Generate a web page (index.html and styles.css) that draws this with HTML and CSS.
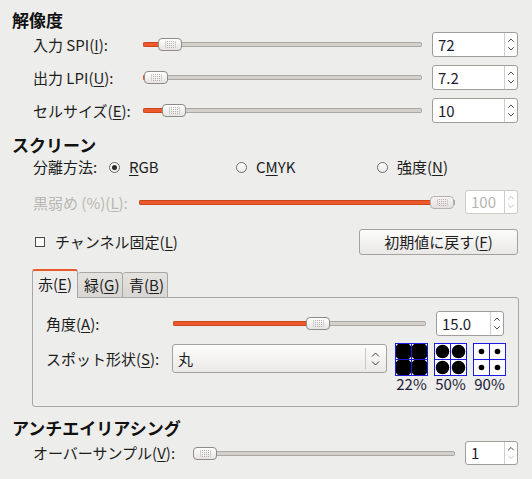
FILE: index.html
```html
<!DOCTYPE html>
<html lang="ja">
<head>
<meta charset="utf-8">
<title>Newsprint</title>
<link rel="stylesheet" href="styles.css">
</head>
<body>
<div class="page">
  <div class="heading">解像度</div>
  <div class="res-rows section">
    <div class="row res-row">
      <div class="label w110">入力 SPI(<u>I</u>):</div>
      <div class="slider"><div class="fill" style="width:15px"></div><div class="handle"></div><div class="rest"></div></div>
      <div class="spin w86"><span class="val">72</span><span class="btns"><svg width="13" height="23" viewBox="0 0 13 23"><path d="M3.5 8.5 L6.5 5.5 L9.5 8.5"/><path d="M3.5 14.5 L6.5 17.5 L9.5 14.5"/></svg></span></div>
    </div>
    <div class="row res-row">
      <div class="label w110">出力 LPI(<u>U</u>):</div>
      <div class="slider"><div class="fill thin" style="width:1px"></div><div class="handle"></div><div class="rest"></div></div>
      <div class="spin w86"><span class="val">7.2</span><span class="btns"><svg width="13" height="23" viewBox="0 0 13 23"><path d="M3.5 8.5 L6.5 5.5 L9.5 8.5"/><path d="M3.5 14.5 L6.5 17.5 L9.5 14.5"/></svg></span></div>
    </div>
    <div class="row res-row">
      <div class="label w110">セルサイズ(<u>E</u>):</div>
      <div class="slider"><div class="fill" style="width:19px"></div><div class="handle"></div><div class="rest"></div></div>
      <div class="spin w86"><span class="val">10</span><span class="btns"><svg width="13" height="23" viewBox="0 0 13 23"><path d="M3.5 8.5 L6.5 5.5 L9.5 8.5"/><path d="M3.5 14.5 L6.5 17.5 L9.5 14.5"/></svg></span></div>
    </div>
  </div>

  <div class="heading h-screen">スクリーン</div>
  <div class="section">
    <div class="radio-row">
      <div class="label">分離方法:</div>
      <div class="radio-item"><span class="radio checked"></span><u>R</u>GB</div>
      <div class="radio-item"><span class="radio"></span>C<u>M</u>YK</div>
      <div class="radio-item"><span class="radio"></span>強度(<u>N</u>)</div>
    </div>
    <div class="row black-row">
      <div class="label w106 disabled">黒弱め (%)(<u>L</u>):</div>
      <div class="slider dis"><div class="fill" style="width:291px"></div><div class="handle"></div><div class="rest"></div></div>
      <div class="spin w53 dis h24"><span class="val">100</span><span class="btns"><svg width="13" height="22" viewBox="0 0 13 22"><path d="M3.5 8 L6.5 5 L9.5 8"/><path d="M3.5 14 L6.5 17 L9.5 14"/></svg></span></div>
    </div>
    <div class="check-row">
      <span class="checkbox"></span>
      <span class="check-text">チャンネル固定(<u>L</u>)</span>
      <button class="btn">初期値に戻す(<u>F</u>)</button>
    </div>
  </div>

  <div class="tabs">
    <div class="tab active">赤(<u>E</u>)</div>
    <div class="tab">緑(<u>G</u>)</div>
    <div class="tab">青(<u>B</u>)</div>
  </div>
  <div class="panel">
    <div class="row angle-row">
      <div class="label w127">角度(<u>A</u>):</div>
      <div class="slider"><div class="fill" style="width:133px"></div><div class="handle"></div><div class="rest"></div></div>
      <div class="spin w68"><span class="val">15.0</span><span class="btns"><svg width="13" height="23" viewBox="0 0 13 23"><path d="M3.5 8.5 L6.5 5.5 L9.5 8.5"/><path d="M3.5 14.5 L6.5 17.5 L9.5 14.5"/></svg></span></div>
    </div>
    <div class="spot-row">
      <div class="label w126 combo-label">スポット形状(<u>S</u>):</div>
      <div class="combo">
        <span class="combo-text">丸</span>
        <span class="combo-sep"></span>
        <span class="combo-arrow"><svg width="20" height="27" viewBox="0 0 20 27"><path d="M6 11.5 L9.5 8 L13 11.5"/><path d="M6 16.5 L9.5 20 L13 16.5"/></svg></span>
      </div>
      <div class="previews">
        <div class="preview">
          <svg width="33" height="33" viewBox="0 0 33 33">
            <circle cx="8.5" cy="8.5" r="9.2"/><circle cx="24.5" cy="8.5" r="9.2"/><circle cx="8.5" cy="24.5" r="9.2"/><circle cx="24.5" cy="24.5" r="9.2"/>
            <rect class="grid-line" x="0.5" y="0.5" width="32" height="32"/><path class="grid-line" d="M16.5 0 V33 M0 16.5 H33"/>
          </svg>
          <span class="pct">22%</span>
        </div>
        <div class="preview">
          <svg width="33" height="33" viewBox="0 0 33 33">
            <circle cx="8.5" cy="8.5" r="6.8"/><circle cx="24.5" cy="8.5" r="6.8"/><circle cx="8.5" cy="24.5" r="6.8"/><circle cx="24.5" cy="24.5" r="6.8"/>
            <rect class="grid-line" x="0.5" y="0.5" width="32" height="32"/><path class="grid-line" d="M16.5 0 V33 M0 16.5 H33"/>
          </svg>
          <span class="pct">50%</span>
        </div>
        <div class="preview">
          <svg width="33" height="33" viewBox="0 0 33 33">
            <circle cx="8.5" cy="8.5" r="2.8"/><circle cx="24.5" cy="8.5" r="2.8"/><circle cx="8.5" cy="24.5" r="2.8"/><circle cx="24.5" cy="24.5" r="2.8"/>
            <rect class="grid-line" x="0.5" y="0.5" width="32" height="32"/><path class="grid-line" d="M16.5 0 V33 M0 16.5 H33"/>
          </svg>
          <span class="pct">90%</span>
        </div>
      </div>
    </div>
  </div>

  <div class="heading h-aa">アンチエイリアシング</div>
  <div class="section">
    <div class="row over-row">
      <div class="label w160">オーバーサンプル(<u>V</u>):</div>
      <div class="slider"><div class="handle"></div><div class="rest"></div></div>
      <div class="spin w53 h24"><span class="val">1</span><span class="btns min"><svg width="13" height="22" viewBox="0 0 13 22"><path class="up" d="M3.5 8 L6.5 5 L9.5 8"/><path class="down" d="M3.5 14 L6.5 17 L9.5 14"/></svg></span></div>
    </div>
  </div>
</div>
</body>
</html>
```
FILE: styles.css
```css
* { box-sizing: border-box; }
html, body { margin: 0; padding: 0; }
body {
  width: 532px;
  height: 479px;
  overflow: hidden;
  background: #ededeb;
  font-family: "Noto Sans CJK JP", "DejaVu Sans", sans-serif;
  font-size: 15px;
  color: #1e1e1e;
}
u { text-decoration-thickness: 1px; text-underline-offset: 2px; }
.page { padding: 10px 14px 0 12px; }
.heading { font-size: 17px; font-weight: bold; line-height: 20px; height: 20px; color: #111; }
.h-screen { margin-top: 12px; }
.h-aa { margin-top: 11px; }
.section { margin-left: 21px; }

.label { white-space: nowrap; line-height: 20px; }
.w110 { width: 110px; flex: none; }
.w106 { width: 106px; flex: none; }
.w127 { width: 127px; flex: none; }
.w126 { width: 126px; flex: none; }
.w160 { width: 160px; flex: none; }
.disabled { color: #b9b7b3; }

.row { display: flex; align-items: center; height: 25px; }
.res-rows { display: flex; flex-direction: column; gap: 8px; margin-top: 2px; }

/* slider */
.slider { flex: 1; display: flex; align-items: center; height: 13px; margin-right: 10px; }
.fill {
  flex: none;
  height: 5px;
  background: #ee5a2b;
  border: 1px solid #c9461f;
  border-right: none;
  border-radius: 2px 0 0 2px;
}
.fill.thin { border: none; background: #e0532a; }
.handle {
  flex: none;
  width: 24px;
  height: 13px;
  border: 1px solid #8f8b87;
  border-radius: 4px;
  background: linear-gradient(#fefefe, #e6e4e1);
  display: flex;
  align-items: center;
  justify-content: center;
}
.handle::after {
  content: "";
  width: 9px;
  height: 7px;
  border-left: 1px solid #d2cfcb;
  border-right: 1px solid #d2cfcb;
  background: conic-gradient(#b3afab 25%, transparent 0) 0 0 / 2px 2px;
}
.rest {
  flex: 1;
  height: 5px;
  background: #d4d0cc;
  border: 1px solid #aba7a3;
  border-left: none;
  border-radius: 0 2px 2px 0;
}
.slider.dis .handle { border-color: #b5b2ae; background: linear-gradient(#f6f5f4, #e3e1de); }

/* spin */
.spin {
  flex: none;
  display: flex;
  height: 25px;
  background: #fff;
  border: 1px solid #a09e9b;
  border-radius: 3px;
}
.spin.h24 { height: 24px; }
.w86 { width: 86px; }
.w68 { width: 68px; }
.w53 { width: 53px; }
.val { flex: 1; padding-left: 5px; line-height: 23px; font-size: 15px; color: #1c1c2c; }
.spin.h24 .val { line-height: 22px; }
.btns { flex: none; width: 13px; border-left: 1px solid #cfcdca; display: flex; }
.btns svg { display: block; }
.btns path { fill: none; stroke: #3b3b3b; stroke-width: 1; }
.spin.dis { border-color: #cdcbc8; }
.spin.dis .val { color: #b7b5b2; }
.spin.dis .btns path { stroke: #bbb9b6; }
.btns.min path.down { stroke: #c2c0bd; }

/* radios */
.radio-row {
  display: grid;
  grid-template-columns: 76px 127px 141px auto;
  height: 20px;
  line-height: 20px;
  margin-top: 2px;
  align-items: center;
}
.radio-item { display: flex; align-items: center; white-space: nowrap; }
.radio {
  width: 11px;
  height: 11px;
  border: 1px solid #6e6c69;
  border-radius: 50%;
  background: linear-gradient(#ffffff, #ecebea);
  margin-right: 9px;
  display: flex;
  align-items: center;
  justify-content: center;
}
.radio.checked::after {
  content: "";
  width: 5px;
  height: 5px;
  border-radius: 50%;
  background: #2a2a2a;
}

.black-row { margin-top: 13px; }
.black-row .spin { margin-top: -1px; }

.check-row { display: flex; align-items: center; height: 26px; margin-top: 14px; }
.checkbox {
  width: 10px;
  height: 10px;
  border: 1px solid #4a4a4a;
  background: #fff;
  margin-left: 2px;
  margin-right: 10px;
  flex: none;
}
.check-text { line-height: 20px; }
.btn {
  margin-left: auto;
  width: 159px;
  height: 26px;
  font: inherit;
  font-size: 15px;
  color: #1e1e1e;
  line-height: 22px;
  padding: 0;
  border: 1px solid #a4a29f;
  border-radius: 3px;
  background: linear-gradient(#fcfcfb, #e9e8e6);
}

/* tabs */
.tabs { display: flex; align-items: flex-end; margin-left: 20px; margin-top: 14px; height: 28px; }
.tab {
  height: 25px;
  width: 45px;
  border: 1px solid #a9a7a3;
  border-bottom: none;
  border-left: none;
  border-radius: 3px 3px 0 0;
  background: linear-gradient(#e4e3e0, #d8d6d3);
  line-height: 24px;
  padding-left: 6px;
  white-space: nowrap;
}
.tab.active {
  width: 46px;
  height: 29px;
  border-left: 1px solid #a9a7a3;
  border-top: 2px solid #ea5a2a;
  background: #ededeb;
  position: relative;
  z-index: 1;
  margin-bottom: -1px;
  line-height: 26px;
  padding-left: 5px;
}
.panel {
  margin-left: 20px;
  width: 487px;
  height: 110px;
  border: 1px solid #a9a7a3;
  border-radius: 0 3px 3px 3px;
  padding: 13px 14px 0 13px;
}
.angle-row .slider { margin-right: 10px; }

.spot-row { display: flex; align-items: flex-start; margin-top: 8px; }
.combo-label { line-height: 29px; }
.combo {
  width: 215px;
  height: 29px;
  flex: none;
  display: flex;
  align-items: center;
  border: 1px solid #a4a29f;
  border-radius: 3px;
  background: linear-gradient(#fdfdfd, #ebe9e7);
}
.combo-text { flex: 1; padding-left: 5px; line-height: 27px; }
.combo-sep { width: 1px; height: 21px; background: #c9c7c4; }
.combo-arrow { width: 20px; height: 27px; }
.combo-arrow svg { display: block; }
.combo-arrow path { fill: none; stroke: #3a3a3a; stroke-width: 1; }

.previews { display: flex; gap: 6px; margin-left: 8px; margin-top: -1px; }
.preview { display: flex; flex-direction: column; align-items: center; width: 33px; }
.preview svg { display: block; background: #fff; }
.preview circle { fill: #000; }
.grid-line { fill: none; stroke: #1a1ae6; stroke-width: 1; }
.pct { line-height: 16px; font-size: 15px; color: #1b1b3a; white-space: nowrap; }

.over-row { margin-top: 3px; height: 24px; }
```
